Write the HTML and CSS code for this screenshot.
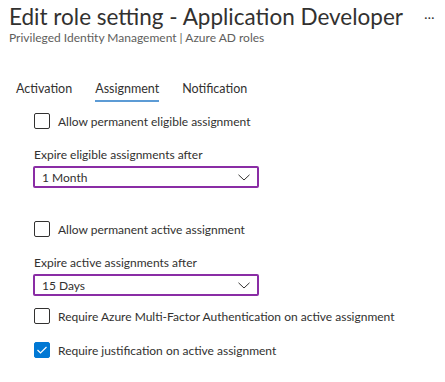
FILE: index.html
```html
<!DOCTYPE html>
<html lang="en">
<head>
    <meta charset="UTF-8">
    <title>Edit role setting</title>
    <link rel="stylesheet" href="styles.css">
</head>
<body>
    <div class="header">
        <h1>Edit role setting - Application Developer</h1>
        <span class="more">&middot;&middot;&middot;</span>
    </div>
    <div class="subtitle">Privileged Identity Management | Azure AD roles</div>

    <div class="tabs">
        <div class="tab">Activation</div>
        <div class="tab active">Assignment</div>
        <div class="tab">Notification</div>
    </div>

    <div class="form">
        <label class="check first">
            <span class="box"></span>
            <span>Allow permanent eligible assignment</span>
        </label>
        <div class="field">
            <div class="field-label">Expire eligible assignments after</div>
            <div class="select">
                <span>1 Month</span>
                <svg width="12" height="7" viewBox="0 0 12 7"><path d="M0.5 0.8 L6 6 L11.5 0.8" fill="none" stroke="#323130" stroke-width="1"/></svg>
            </div>
        </div>

        <label class="check gap-top">
            <span class="box"></span>
            <span>Allow permanent active assignment</span>
        </label>
        <div class="field">
            <div class="field-label">Expire active assignments after</div>
            <div class="select">
                <span>15 Days</span>
                <svg width="12" height="7" viewBox="0 0 12 7"><path d="M0.5 0.8 L6 6 L11.5 0.8" fill="none" stroke="#323130" stroke-width="1"/></svg>
            </div>
        </div>

        <label class="check after-select">
            <span class="box"></span>
            <span>Require Azure Multi-Factor Authentication on active assignment</span>
        </label>
        <label class="check">
            <span class="box checked">
                <svg width="12" height="10" viewBox="0 0 12 10"><path d="M1.5 5 L4.5 8 L10.5 2" fill="none" stroke="#fff" stroke-width="1.2"/></svg>
            </span>
            <span>Require justification on active assignment</span>
        </label>
    </div>
</body>
</html>
```

FILE: styles.css
```css
body {
    margin: 0;
    padding: 0 9px;
    font-family: 'Lato', sans-serif;
    color: #323130;
    background-color: #fff;
}
.header {
    display: flex;
    align-items: center;
    justify-content: space-between;
    padding-top: 3px;
}
h1 {
    margin: 0;
    font-size: 22.5px;
    font-weight: 400;
    line-height: 28px;
    white-space: nowrap;
}
.more {
    font-size: 12px;
    color: #323130;
    margin-right: 1px;
    letter-spacing: 0.5px;
}
.subtitle {
    font-size: 12px;
    color: #605e5c;
    line-height: 14px;
}
.tabs {
    display: flex;
    gap: 23px;
    margin-top: 34px;
    padding-left: 7px;
}
.tab {
    font-size: 12.5px;
    line-height: 20px;
    padding-bottom: 1px;
    border-bottom: 2px solid transparent;
}
.tab.active {
    border-bottom-color: #5c9bd5;
}
.form {
    padding-left: 25px;
    font-size: 12px;
}
.check {
    display: flex;
    align-items: center;
    gap: 8px;
    margin-top: 14px;
    height: 20px;
}
.check.first {
    margin-top: 9px;
}
.check.after-select {
    margin-top: 10px;
}
.box {
    width: 14px;
    height: 14px;
    border: 1px solid #323130;
    border-radius: 2px;
    display: flex;
    align-items: center;
    justify-content: center;
}
.box.checked {
    background-color: #0078d4;
    border-color: #0078d4;
}
.field {
    margin-top: 15px;
}
.field-label {
    line-height: 17px;
}
.select {
    width: 208px;
    height: 18px;
    border: 2px solid #8a2da5;
    border-radius: 2px;
    display: flex;
    align-items: center;
    justify-content: space-between;
    padding: 0 7px 0 7px;
    margin-top: 3px;
    margin-left: -1px;
    box-sizing: content-box;
}
.gap-top {
    margin-top: 31px;
}
```
